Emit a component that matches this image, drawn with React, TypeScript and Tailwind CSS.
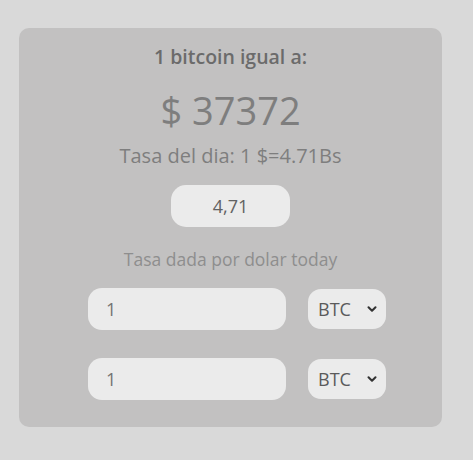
import { ChevronDown } from "lucide-react"

function CurrencyRow({ value }: { value: string }) {
  return (
    <div className="flex items-center gap-[22px]">
      <div className="flex h-[42px] w-[198px] items-center rounded-[14px] bg-[#ebebeb] pl-[18px] text-[18px] text-[#747474]">
        {value}
      </div>
      <div className="flex h-[40px] w-[78px] items-center justify-between rounded-[13px] bg-[#ebebeb] pl-[10px] pr-[7px] text-[18px] text-[#5a5a5a]">
        <span>BTC</span>
        <ChevronDown className="h-3.5 w-3.5 text-[#333]" strokeWidth={3.5} />
      </div>
    </div>
  )
}

export default function App() {
  return (
    <div
      className="h-[460px] w-[473px] bg-[#d9d9d9] pl-[19px] pt-[28px]"
      style={{ fontFamily: '"Open Sans", "Noto Sans", sans-serif' }}
    >
      <div className="flex h-[399px] w-[423px] flex-col items-center rounded-[10px] bg-[#c2c1c1]">
        <h1 className="mt-[16px] text-[19.5px] font-semibold leading-[26px] text-[#6b6b6b]">
          1 bitcoin igual a:
        </h1>
        <p className="mt-[18px] text-[38px] leading-[44px] text-[#7e7e7e]">$ 37372</p>
        <p className="mt-[11px] text-[20px] leading-[26px] text-[#7e7e7e]">Tasa del dia: 1 $=4.71Bs</p>
        <div className="mt-[16px] flex h-[42px] w-[119px] items-center justify-center rounded-[15px] bg-[#ebebeb] text-[18px] text-[#626262]">
          4,71
        </div>
        <p className="mt-[20px] text-[17.5px] leading-[24px] text-[#8e8e8e]">Tasa dada por dolar today</p>
        <div className="mt-[17px] flex flex-col gap-[28px] pl-[13px]">
          <CurrencyRow value="1" />
          <CurrencyRow value="1" />
        </div>
      </div>
    </div>
  )
}
